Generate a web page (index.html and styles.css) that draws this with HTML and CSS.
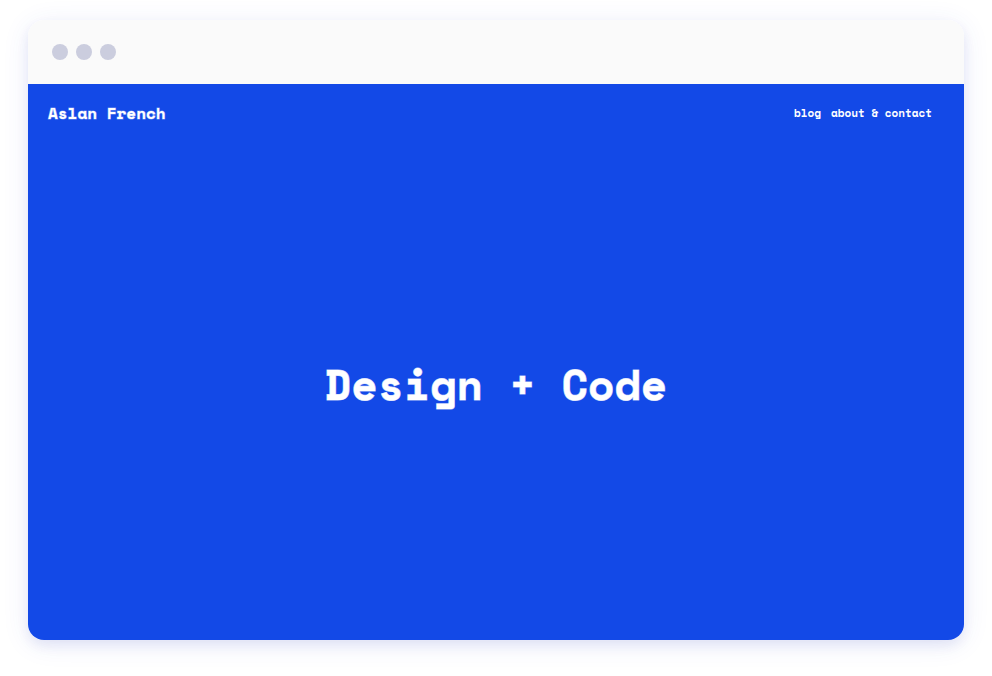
FILE: index.html
```html
<!DOCTYPE html>
<html lang="en">
<head>
  <meta charset="utf-8">
  <meta name="viewport" content="width=device-width, initial-scale=1">
  <title>Aslan French</title>
  <link rel="stylesheet" href="styles.css">
</head>
<body>
  <div class="window">
    <div class="window-bar">
      <span class="dot"></span>
      <span class="dot"></span>
      <span class="dot"></span>
    </div>
    <div class="site">
      <header class="site-header">
        <a class="brand" href="#">Aslan French</a>
        <nav class="site-nav">
          <a href="#">blog</a>
          <a href="#">about &amp; contact</a>
        </nav>
      </header>
      <main class="hero">
        <h1>Design + Code</h1>
      </main>
    </div>
  </div>
</body>
</html>
```
FILE: styles.css
```css
* {
  box-sizing: border-box;
}

body {
  margin: 0;
  min-height: 100vh;
  padding: 20px 28px 36px;
  display: flex;
  background: #fff;
  font-family: "Space Mono", "DejaVu Sans Mono", "Liberation Mono", monospace;
  font-weight: 700;
}

.window {
  flex: 1;
  display: flex;
  flex-direction: column;
  border-radius: 16px;
  overflow: hidden;
  box-shadow:
    0 6px 12px rgba(40, 50, 170, 0.09),
    0 4px 28px rgba(60, 80, 220, 0.09);
}

.window-bar {
  display: flex;
  gap: 8px;
  padding: 24px;
  background: #fafafa;
}

.dot {
  width: 16px;
  height: 16px;
  border-radius: 50%;
  background: #cbcdde;
}

.site {
  flex: 1;
  display: flex;
  flex-direction: column;
  background: #1349e7;
  color: #fff;
}

.site-header {
  display: flex;
  align-items: center;
  justify-content: space-between;
  padding: 17px 32px 17px 20px;
}

.site-header a {
  color: inherit;
  text-decoration: none;
}

.brand {
  font-size: 16px;
  line-height: 24px;
  -webkit-text-stroke: 1px rgba(255, 255, 255, 0.4);
}

.site-nav {
  display: flex;
  gap: 10px;
  font-size: 11px;
  line-height: 16px;
}

.hero {
  flex: 1;
  display: flex;
  align-items: center;
  justify-content: center;
  padding-bottom: 14px;
}

.hero h1 {
  margin: 0;
  font-size: 43px;
  line-height: 56px;
  -webkit-text-stroke: 1px rgba(255, 255, 255, 0.7);
}
```
